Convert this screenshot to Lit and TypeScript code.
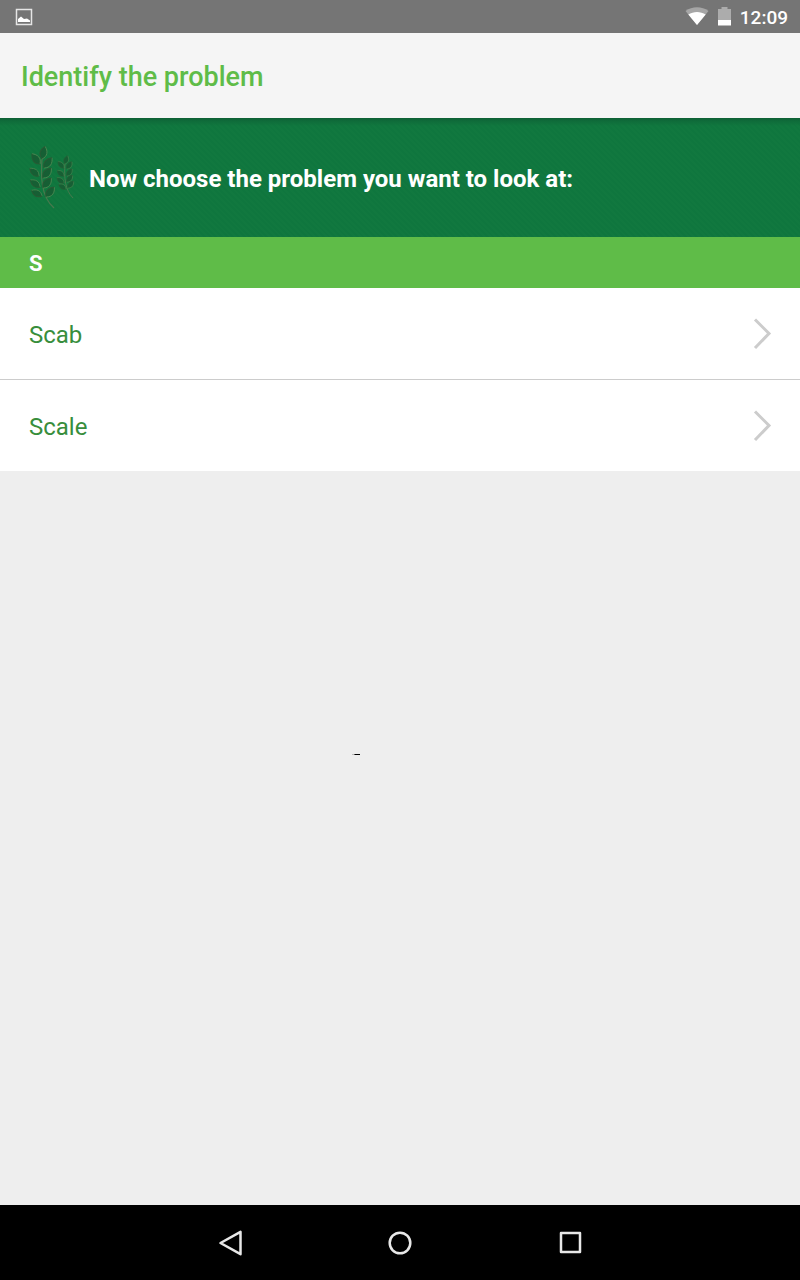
import { LitElement, html, css, svg } from "lit";
import { customElement, property } from "lit/decorators.js";

interface Leaf {
  x: number;
  y: number;
  angle: number;
  size: number;
}

// Leaves of the large and the small sprig, in the units of the 50 x 64 drawing.
const LARGE_SPRIG: Leaf[] = [
  { x: 16, y: 13, angle: 14, size: 12 },
  { x: 14, y: 18, angle: -38, size: 12 },
  { x: 18, y: 22, angle: 38, size: 12 },
  { x: 13, y: 30, angle: -50, size: 11 },
  { x: 17, y: 32, angle: 40, size: 12 },
  { x: 14, y: 41, angle: -54, size: 11 },
  { x: 17, y: 42, angle: 40, size: 12 },
  { x: 16, y: 50, angle: -62, size: 11 },
  { x: 20, y: 51, angle: 40, size: 12 },
];

const SMALL_SPRIG: Leaf[] = [
  { x: 39, y: 18, angle: 18, size: 8 },
  { x: 38, y: 22, angle: -42, size: 8 },
  { x: 41, y: 23, angle: 34, size: 8 },
  { x: 38, y: 30, angle: -50, size: 8 },
  { x: 41, y: 30, angle: 36, size: 8 },
  { x: 38, y: 37, angle: -52, size: 8 },
  { x: 41, y: 36, angle: 40, size: 8 },
  { x: 40, y: 43, angle: -56, size: 8 },
  { x: 42, y: 42, angle: 40, size: 8 },
];

const leaf = (l: Leaf) => svg`
  <g transform="translate(${l.x} ${l.y}) rotate(${l.angle}) scale(${l.size / 12})">
    <path d="M0 0C-5-4-4-9 0-13C4-9 5-4 0 0Z" fill="#165f34"></path>
    <path d="M0 0C5-4 4-9 0-13" fill="none" stroke="#4a8650" stroke-width="0.9"></path>
    <path d="M0 0C-5-4-4-9 0-13" fill="none" stroke="#2a5934" stroke-width="1"></path>
  </g>`;

@customElement("status-bar")
class StatusBar extends LitElement {
  static styles = css`
    :host {
      display: flex;
      align-items: center;
      height: 33px;
      padding: 0 12px 0 15px;
      background: #757575;
      color: #fff;
    }
    svg {
      display: block;
    }
    .right {
      display: flex;
      align-items: center;
      margin-left: auto;
    }
    .battery {
      margin: 0 9px;
    }
    .clock {
      font-size: 19px;
      font-weight: 500;
      line-height: 32px;
      padding-top: 2px;
    }
  `;

  render() {
    return html`
      <svg width="18" height="18" viewBox="0 0 18 18" aria-hidden="true">
        <rect x="1.5" y="1.5" width="15" height="15" fill="none" stroke="#e6e6e6" stroke-width="1.5" />
        <path d="M3 14V11L6 8.5L9 11L12 10.5L15 12.5V14Z" fill="#fff" />
      </svg>
      <div class="right">
        <svg width="24" height="20" viewBox="0 0 24 20" aria-hidden="true">
          <path d="M0.5 4C7-1 17-1 23.5 4L12 18Z" fill="#a6a6a6" />
          <path d="M3.3 7.500C8.500 4 15.500 4 20.700 7.500L12 18Z" fill="#fff" />
        </svg>
        <svg class="battery" width="13" height="20" viewBox="0 0 13 20" aria-hidden="true">
          <path d="M3.500 0H9.500V2H13V13H0V2H3.500Z" fill="#acacac" />
          <path d="M0 13H13V18.500H0Z" fill="#fff" />
        </svg>
        <span class="clock">12:09</span>
      </div>
    `;
  }
}

@customElement("choice-banner")
class ChoiceBanner extends LitElement {
  static styles = css`
    :host {
      display: flex;
      align-items: center;
      gap: 13px;
      box-sizing: border-box;
      height: 119px;
      padding: 0 28px 0 26px;
      color: #fff;
      background:
        linear-gradient(#0d5f35, #0f6c3a 3px, transparent 8px),
        repeating-linear-gradient(45deg, #0f763e 0 2px, #11783f 2px 4px);
    }
    svg {
      flex: none;
    }
    h2 {
      margin: 0;
      padding-top: 2px;
      font-size: 24px;
      font-weight: 700;
      line-height: 32px;
    }
  `;

  render() {
    return html`
      <svg width="50" height="64" viewBox="0 0 50 64" aria-hidden="true">
        <path d="M16 12C15 28 14 50 28 62" fill="none" stroke="#47794d" stroke-width="1.300" />
        <path d="M39 17C38 32 39 44 47 52" fill="none" stroke="#47794d" stroke-width="1" />
        ${LARGE_SPRIG.map(leaf)} ${SMALL_SPRIG.map(leaf)}
      </svg>
      <h2><slot></slot></h2>
    `;
  }
}

@customElement("problem-list")
class ProblemList extends LitElement {
  @property() letter = "";
  @property({ attribute: false }) items: string[] = [];

  static styles = css`
    :host {
      display: block;
    }
    h3 {
      margin: 0;
      padding: 3px 29px 0;
      background: #5fbc48;
      color: #fff;
      font-size: 22px;
      font-weight: 700;
      line-height: 48px;
    }
    ul {
      margin: 0;
      padding: 0;
      list-style: none;
      background: #fff;
    }
    li + li {
      border-top: 1px solid #ccc;
    }
    a {
      display: flex;
      align-items: center;
      justify-content: space-between;
      height: 91px;
      padding: 0 28px 0 29px;
      color: #388e3c;
      font-size: 24px;
      text-decoration: none;
    }
    .name {
      line-height: 32px;
      padding-top: 2px;
    }
  `;

  render() {
    return html`
      <h3>${this.letter}</h3>
      <ul>
        ${this.items.map(
          (name) => html`<li>
            <a href="#${name.toLowerCase()}">
              <span class="name">${name}</span>
              <svg width="20" height="32" viewBox="0 0 20 32" aria-hidden="true">
                <path d="M3 1.500L17 15.500L3 30" fill="none" stroke="#ccc" stroke-width="3" />
              </svg>
            </a>
          </li>`
        )}
      </ul>
    `;
  }
}

@customElement("navigation-bar")
class NavigationBar extends LitElement {
  static styles = css`
    :host {
      display: flex;
      justify-content: center;
      height: 75px;
      background: #000;
    }
    button {
      display: flex;
      align-items: center;
      justify-content: center;
      width: 170px;
      padding: 0;
      border: 0;
      background: none;
    }
    svg {
      fill: none;
      stroke: #e8e8e8;
      stroke-width: 2.5;
      stroke-linejoin: round;
    }
  `;

  render() {
    return html`
      <button aria-label="Back">
        <svg width="28" height="28" viewBox="0 0 28 28">
          <path d="M24.500 2.800V25.200L4.500 14Z" />
        </svg>
      </button>
      <button aria-label="Home">
        <svg width="28" height="28" viewBox="0 0 28 28">
          <circle cx="14" cy="14" r="10.300" />
        </svg>
      </button>
      <button aria-label="Overview">
        <svg width="28" height="28" viewBox="0 0 28 28">
          <rect x="5" y="4" width="19" height="19" />
        </svg>
      </button>
    `;
  }
}

@customElement("app-root")
class AppRoot extends LitElement {
  static styles = css`
    :host {
      display: flex;
      flex-direction: column;
      min-height: 100vh;
      background: #eee;
      font-family: Roboto, "Noto Sans", sans-serif;
    }
    header {
      padding: 4px 21px 0;
      background: #f5f5f5;
    }
    h1 {
      margin: 0;
      color: #5fbc48;
      font-size: 27px;
      font-weight: 500;
      line-height: 81px;
    }
    main {
      flex: 1;
    }
    .mark {
      width: 8px;
      height: 1px;
      margin: 283px 0 0 44%;
      background: linear-gradient(90deg, #bbb 0 2px, #555 2px 3px, #000 3px);
    }
  `;

  render() {
    return html`
      <status-bar></status-bar>
      <header><h1>Identify the problem</h1></header>
      <main>
        <choice-banner>Now choose the problem you want to look at:</choice-banner>
        <problem-list letter="S" .items=${["Scab", "Scale"]}></problem-list>
        <div class="mark"></div>
      </main>
      <navigation-bar></navigation-bar>
    `;
  }
}
